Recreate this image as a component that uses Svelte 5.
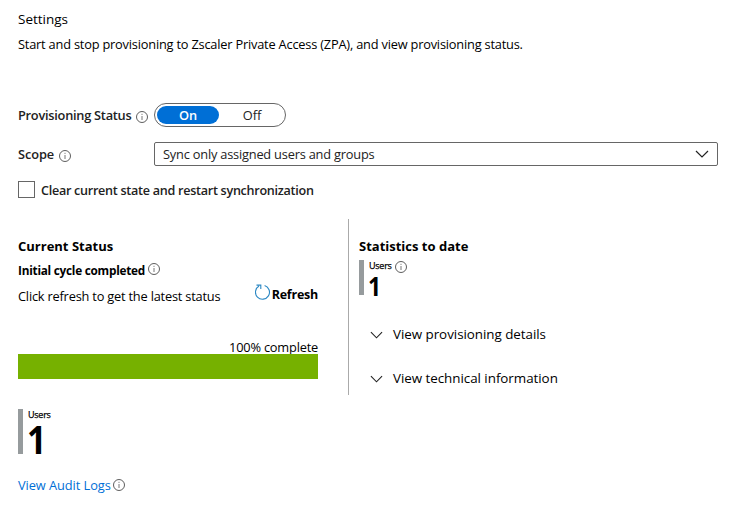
<script>
  let enabled = $state(true);
  let restart = $state(false);
</script>

{#snippet info()}
  <svg class="info" width="12" height="12" viewBox="0 0 12 12" aria-hidden="true">
    <circle cx="6" cy="6" r="5.5" fill="none" stroke="#555" stroke-width=".95" />
    <path d="M6 5v4M6 2.8v1.1" stroke="#777" stroke-width="1" />
  </svg>
{/snippet}

{#snippet chevron(width)}
  <svg class="chevron" {width} height="8" viewBox="0 0 14 8" aria-hidden="true">
    <path d="M1 1l6 6 6-6" fill="none" stroke="#222" stroke-width="1.2" />
  </svg>
{/snippet}

<main>
  <header>
    <h1>Settings</h1>
    <p>Start and stop provisioning to Zscaler Private Access (ZPA), and view provisioning status.</p>
  </header>

  <section class="form">
    <div class="field">
      <div class="label"><span>Provisioning Status</span>{@render info()}</div>
      <div class="toggle">
        <button class:active={enabled} onclick={() => (enabled = true)}>On</button>
        <button class:active={!enabled} onclick={() => (enabled = false)}>Off</button>
      </div>
    </div>
    <div class="field scope">
      <div class="label"><span>Scope</span>{@render info()}</div>
      <div class="select"><span>Sync only assigned users and groups</span>{@render chevron(14)}</div>
    </div>
    <label class="check">
      <input type="checkbox" bind:checked={restart} />
      <span>Clear current state and restart synchronization</span>
    </label>
  </section>

  <section class="columns">
    <div class="status">
      <h2>Current Status</h2>
      <div class="cycle"><span>Initial cycle completed</span>{@render info()}</div>
      <div class="refresh-row">
        <span class="click">Click refresh to get the latest status</span>
        <button class="refresh">
          <svg width="17" height="17" viewBox="0 0 17 17" aria-hidden="true">
            <path d="M9.6 1.5A7 7 0 1 1 4 2.1M1.5 1.1H5.8V5" fill="none" stroke="#2b88c4" stroke-width="1.1" />
          </svg>
          <span>Refresh</span>
        </button>
      </div>
      <div class="progress-label">100% complete</div>
      <div class="progress"></div>
    </div>
    <div class="stats">
      <h2>Statistics to date</h2>
      <div class="metric small">
        <div class="name"><span>Users</span>{@render info()}</div>
        <strong>1</strong>
      </div>
      <button class="expand">{@render chevron(13)}<span>View provisioning details</span></button>
      <button class="expand">{@render chevron(13)}<span>View technical information</span></button>
    </div>
  </section>

  <div class="metric large">
    <div class="name"><span>Users</span></div>
    <strong>1</strong>
  </div>
  <div class="audit"><a href="#audit">View Audit Logs</a>{@render info()}</div>
</main>

<style>
  :global(body) { background: #fff; }
  main { box-sizing: border-box; width: 747px; height: 521px; padding: 9px 29px 0 18px; font: 12.8px/20px "Open Sans", "Noto Sans", sans-serif; letter-spacing: -.2px; color: #000; white-space: nowrap; }
  h1, h2, p { margin: 0; }
  h1 { font-weight: 400; font-size: 13.5px; letter-spacing: 0; }
  h2 { font-weight: 700; font-size: 13px; letter-spacing: 0; }
  p { margin-top: 5px; }
  button { border: 0; padding: 0; background: none; font: inherit; color: inherit; letter-spacing: inherit; }
  svg { flex: none; display: block; }
  .form { margin-top: 49px; color: #222; }
  .field { display: flex; align-items: center; height: 24px; }
  .scope { margin-top: 15px; }
  .label { display: flex; align-items: center; width: 136px; font-weight: 600; letter-spacing: -.26px; }
  .scope .label { letter-spacing: -.1px; }
  .label .info { margin: 3px 0 0 5px; }
  .toggle { box-sizing: border-box; display: flex; width: 132px; height: 24px; padding: 2px; border: 1px solid #666; border-radius: 12px; }
  .toggle button { flex: 1; height: 18px; line-height: 18px; border-radius: 9px; letter-spacing: 0; }
  .toggle button + button { padding-left: 2px; }
  .toggle button:first-child { flex: none; width: 62px; }
  .toggle button.active { background: #006fd6; color: #fff; font-weight: 600; }
  .select { box-sizing: border-box; display: flex; align-items: center; justify-content: space-between; flex: 1; height: 24px; border: 1px solid #666; border-radius: 2px; padding: 0 8px; }
  .check { display: flex; height: 20px; margin-top: 14px; font-size: 12.6px; font-weight: 600; letter-spacing: -.28px; }
  .check span { padding-top: 1px; }
  input { appearance: none; box-sizing: border-box; width: 17px; height: 17px; margin: 1px 6px 0 0; border: 1px solid #666; }
  .columns { display: flex; height: 176px; margin-top: 19px; }
  .status { width: 330px; border-right: 1px solid #aaa; }
  .status h2, .stats h2 { margin-top: 17px; }
  .cycle { display: flex; font-weight: 700; margin-top: 4px; font-size: 11.8px; letter-spacing: -.25px; }
  .cycle .info { margin: 3px 0 0 3px; }
  .refresh-row { display: flex; justify-content: space-between; width: 300px; height: 22px; margin-top: 5px; }
  .click { margin-top: 1px; }
  .refresh { display: flex; height: 20px; font-size: 12.5px; font-weight: 700; letter-spacing: -.24px; }
  .refresh svg { margin-top: -1px; }
  .progress-label { width: 300px; text-align: right; margin-top: 30px; height: 17px; }
  .progress { position: relative; width: 300px; height: 25px; background: #76b100; }
  .stats { padding-left: 10px; }
  .metric { box-sizing: border-box; border-left: 5px solid #969b9d; padding-left: 5px; }
  .name { display: flex; font-size: 9px; line-height: 12px; letter-spacing: -.25px; -webkit-text-stroke: .25px #000; }
  .name .info { margin: 1px 0 -1px 3px; }
  .metric strong { display: block; width: max-content; font-weight: 700; transform: scaleX(.85); transform-origin: left; }
  .small { height: 35px; margin-top: 4px; }
  .small strong { font-size: 27px; line-height: 28px; margin-left: -1px; }
  .large { height: 45px; margin-top: 14px; }
  .large strong { font-size: 40px; line-height: 35px; margin-left: -1px; }
  .expand { display: flex; align-items: center; height: 20px; margin: 29px 0 0 11px; font-size: 13.4px; letter-spacing: -.04px; }
  .expand + .expand { margin-top: 24px; }
  .expand .chevron { margin: 1px 10px 0 0; }
  .audit { display: flex; align-items: center; margin-top: 21px; letter-spacing: -.06px; }
  .audit a { color: #006fd6; text-decoration: none; }
  .audit .info { margin-left: 2px; }
</style>
